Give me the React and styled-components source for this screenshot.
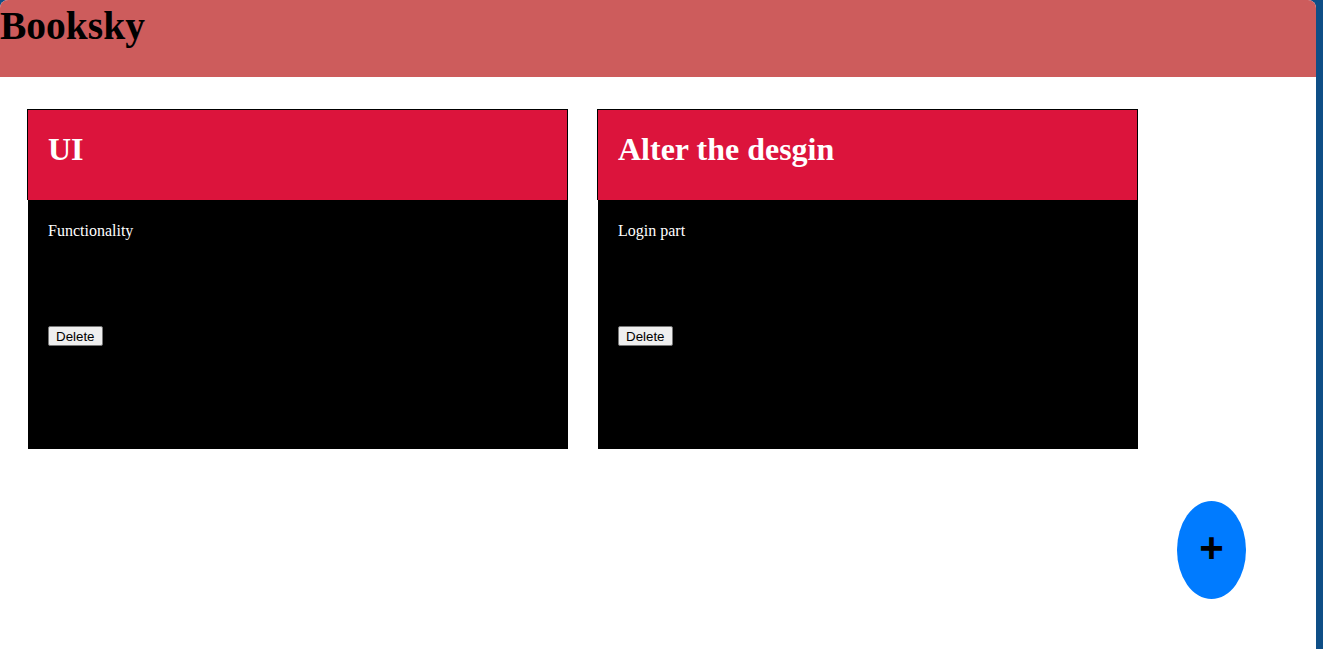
import styled, { createGlobalStyle } from 'styled-components'

const notes = [
  { id: 1, title: 'UI', content: 'Functionality' },
  { id: 2, title: 'Alter the desgin', content: 'Login part' },
]

const App = () => {
  return (
    <>
      <GlobalStyle />
      <Page>
        <TopBar>
          <Brand>Booksky</Brand>
        </TopBar>
        <NoteList>
          {notes.map((note) => (
            <NoteCard key={note.id}>
              <NoteHeader>
                <NoteTitle>{note.title}</NoteTitle>
              </NoteHeader>
              <NoteBody>
                <NoteText>{note.content}</NoteText>
                <DeleteButton>Delete</DeleteButton>
              </NoteBody>
            </NoteCard>
          ))}
        </NoteList>
        <AddButton>+</AddButton>
      </Page>
    </>
  )
}

const GlobalStyle = createGlobalStyle`
  html, body {
    margin: 0;
    padding: 0;
    background: #0e4e86;
    font-family: "Liberation Serif", "Times New Roman", serif;
  }
  body {
    overflow: hidden;
  }
  * {
    box-sizing: border-box;
  }
`

const Page = styled.div`
  position: relative;
  width: 1316px;
  min-height: calc(100vh + 20px);
  background: #ffffff;
  border-radius: 8px;
`

const TopBar = styled.header`
  height: 77px;
  padding-top: 3px;
  background: #cd5c5c;
  border-radius: 8px 8px 0 0;
`

const Brand = styled.h1`
  margin: 0;
  font-size: 39.5px;
  font-weight: bold;
  color: #000;
`

const NoteList = styled.ul`
  display: flex;
  flex-direction: row;
  gap: 29px;
  margin: 0;
  padding: 32px 27px 0;
  list-style: none;
`

const NoteCard = styled.li`
  width: 541px;
`

const NoteHeader = styled.div`
  height: 91px;
  padding: 21px 20px 0;
  background: #dc143c;
  border: 1px solid #000;
  border-bottom: none;
`

const NoteTitle = styled.h2`
  margin: 0;
  font-size: 32px;
  font-weight: bold;
  color: #fff;
`

const NoteBody = styled.div`
  height: 249px;
  margin-left: 1px;
  padding: 22px 20px 20px 20px;
  background: #000;
`

const NoteText = styled.p`
  margin: 0 0 86px;
  font-size: 16px;
  line-height: 18px;
  color: #fff;
`

const DeleteButton = styled.button`
  height: 20px;
  padding: 1px 7px;
  font-family: "Liberation Sans", Arial, sans-serif;
  font-size: 13.33px;
  color: #000;
  background: #efefef;
  border: 1px solid #767676;
  border-radius: 2px;
  cursor: pointer;
`

const AddButton = styled.button`
  position: fixed;
  right: 77px;
  bottom: 50px;
  width: 69px;
  height: 98px;
  padding: 0 0 4px;
  border: none;
  border-radius: 50%;
  background: #007bff;
  color: #000;
  font-family: "Liberation Sans", Arial, sans-serif;
  font-size: 42px;
  font-weight: bold;
  line-height: 1;
  cursor: pointer;
`

export default App
